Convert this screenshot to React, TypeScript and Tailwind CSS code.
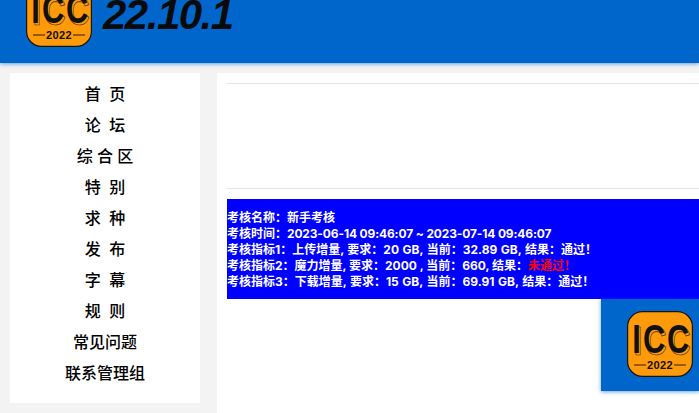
const font = "[font-family:'Inter','Noto_Sans_CJK_SC',sans-serif]";

const navItems = [
  "首\u00a0\u00a0页",
  "论\u00a0\u00a0坛",
  "综\u00a0合\u00a0区",
  "特\u00a0\u00a0别",
  "求\u00a0\u00a0种",
  "发\u00a0\u00a0布",
  "字\u00a0\u00a0幕",
  "规\u00a0\u00a0则",
  "常见问题",
  "联系管理组",
];

function Logo() {
  return (
    <svg width="66" height="66" viewBox="0 0 66 66" className="block shrink-0">
      <rect x="0.6" y="0.6" width="64.8" height="64.8" rx="15" fill="#ff9a0a" stroke="#1c1408" strokeWidth="1.2" />
      <g fontFamily="'Liberation Sans', sans-serif" fontWeight="700" fontSize="41" textAnchor="middle">
        <g fill="none" stroke="#3a2606" strokeWidth="0.7">
          <text transform="translate(11 44) scale(0.75 1)">I</text>
          <text transform="translate(28.5 44) scale(0.75 1)">C</text>
          <text transform="translate(52.5 44) scale(0.75 1)">C</text>
        </g>
        <g fill="#111">
          <text transform="translate(9.5 42) scale(0.75 1)">I</text>
          <text transform="translate(27 42) scale(0.75 1)">C</text>
          <text transform="translate(51 42) scale(0.75 1)">C</text>
        </g>
      </g>
      <path d="M7 54H19M47 54H59" stroke="#2a1c08" strokeWidth="1" />
      <text x="33" y="58" textAnchor="middle" fontFamily="'Liberation Sans', sans-serif" fontWeight="700" fontSize="11" letterSpacing="0.4" fill="#111">
        2022
      </text>
    </svg>
  );
}

export default function App() {
  return (
    <div className={`h-[413px] w-[699px] overflow-hidden bg-[#f3f3f3] ${font}`}>
      <header className="relative z-10 flex h-[63px] items-end gap-[11px] overflow-hidden bg-[#0066cc] pb-[16px] pl-[26px] shadow-[0_1px_4px_rgba(0,102,204,0.6)]">
        <Logo />
        <span className="mb-[11px] font-['Liberation_Sans',sans-serif] text-[42px] leading-[42px] font-bold tracking-[-1.5px] text-[#0a0a0a] italic">
          22.10.1
        </span>
      </header>

      <div className="flex items-stretch pt-[10px] pl-[10px]">
        <nav className="flex h-[330px] w-[190px] shrink-0 flex-col items-center bg-white pt-[6px]">
          {navItems.map((item) => (
            <a key={item} className="h-[31px] text-[16px] leading-[31px] font-medium text-black">
              {item}
            </a>
          ))}
        </nav>

        <main className="ml-[17px] flex h-[340px] min-w-0 flex-1 flex-col bg-white pt-[10px] pl-[10px]">
          <hr className="border-t border-[#e4e4e4]" />
          <div className="h-[104px]" />
          <hr className="border-t border-[#e4e4e4]" />
          <div className="mt-[10px] h-[100px] bg-[#0000ff] pt-[11px] text-[12px] leading-[16px] font-bold text-white">
            <p>考核名称：新手考核</p>
            <p>
              考核时间：<span className="tracking-[-0.15px]">2023-06-14 09:46:07 ~ 2023-07-14 09:46:07</span>
            </p>
            <p className="[word-spacing:0.7px]">考核指标1：上传增量, 要求：20 GB, 当前：32.89 GB, 结果：通过！</p>
            <p>
              考核指标2：魔力增量, 要求：2000 , 当前：660, 结果：
              <span className="text-[#ff0000]">未通过！</span>
            </p>
            <p className="[word-spacing:0.7px]">考核指标3：下载增量, 要求：15 GB, 当前：69.91 GB, 结果：通过！</p>
          </div>
          <div className="flex justify-end">
            <div className="flex h-[92px] w-[98px] items-start justify-end bg-[#0066cc] pt-[12px] pr-[6px] shadow-[0_1px_4px_rgba(0,102,204,0.6)]">
              <Logo />
            </div>
          </div>
        </main>
      </div>
    </div>
  );
}
